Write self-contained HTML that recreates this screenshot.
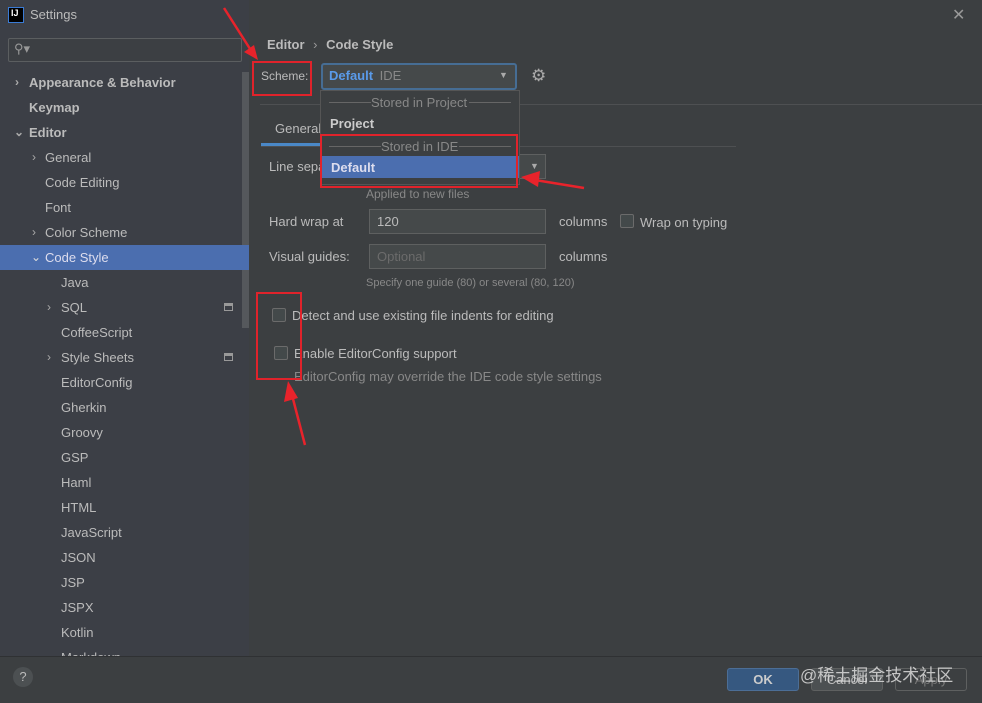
<!DOCTYPE html>
<html><head><style>
*{margin:0;padding:0;box-sizing:border-box}
body{width:982px;height:703px;background:#3c3f41;font-family:"Liberation Sans","Noto Sans CJK SC",sans-serif;font-size:13px;color:#bbbbbb;position:relative;overflow:hidden}
.a{position:absolute;white-space:nowrap}
.side{position:absolute;left:0;top:0;width:249px;height:656px;background:#3c3f46}
.row{position:absolute;left:0;width:242px;height:25px;line-height:25px}
.b{font-weight:bold}
.chev{position:absolute;font-size:12px;color:#aaa}
.red{position:absolute;border:2px solid #e0232b}
.inp{position:absolute;background:#45494a;border:1px solid #5e6060;height:25px;line-height:23px;padding-left:7px}
.cb{position:absolute;width:14px;height:14px;border:1px solid #6b6b6b;background:#43494a;border-radius:2px}
.btn{position:absolute;height:23px;border:1px solid #5e6060;border-radius:3px;text-align:center;line-height:21px;width:72px}
</style></head><body>
<div class="side"></div>
<div class="a" style="left:8px;top:7px;width:16px;height:16px;background:#000;border:1px solid #3a7bd5;color:#fff;font-size:9px;font-weight:bold;line-height:10px;padding-left:2px">IJ</div>
<div class="a" style="left:30px;top:7px;font-size:13px">Settings</div>
<div class="a" style="left:952px;top:5px;font-size:16px;color:#999">✕</div>
<div class="a" style="left:8px;top:38px;width:234px;height:24px;border:1px solid #5b5e60;background:#3c3f43;border-radius:2px"></div>
<div class="a" style="left:14px;top:41px;color:#999;font-size:13px">⚲▾</div>
<div class="a" style="left:242px;top:72px;width:7px;height:256px;background:#55585c"></div>

<div class="row b" style="top:70px"><span class="chev" style="left:15px">›</span><span class="a" style="left:29px">Appearance &amp; Behavior</span></div>
<div class="row b" style="top:95px"><span class="a" style="left:29px">Keymap</span></div>
<div class="row b" style="top:120px"><span class="chev" style="left:14px">⌄</span><span class="a" style="left:29px">Editor</span></div>
<div class="row" style="top:145px"><span class="chev" style="left:32px">›</span><span class="a" style="left:45px">General</span></div>
<div class="row" style="top:170px"><span class="a" style="left:45px">Code Editing</span></div>
<div class="row" style="top:195px"><span class="a" style="left:45px">Font</span></div>
<div class="row" style="top:220px"><span class="chev" style="left:32px">›</span><span class="a" style="left:45px">Color Scheme</span></div>
<div class="row" style="top:245px;background:#4b6eaf;width:249px"><span class="chev" style="left:31px;color:#ddd">⌄</span><span class="a" style="left:45px;color:#dde">Code Style</span></div>
<div class="row" style="top:270px"><span class="a" style="left:61px">Java</span></div>
<div class="row" style="top:295px"><span class="chev" style="left:47px">›</span><span class="a" style="left:61px">SQL</span><span class="a" style="left:224px;top:8px;width:9px;height:8px;border:1px solid #999;border-top-width:3px"></span></div>
<div class="row" style="top:320px"><span class="a" style="left:61px">CoffeeScript</span></div>
<div class="row" style="top:345px"><span class="chev" style="left:47px">›</span><span class="a" style="left:61px">Style Sheets</span><span class="a" style="left:224px;top:8px;width:9px;height:8px;border:1px solid #999;border-top-width:3px"></span></div>
<div class="row" style="top:370px"><span class="a" style="left:61px">EditorConfig</span></div>
<div class="row" style="top:395px"><span class="a" style="left:61px">Gherkin</span></div>
<div class="row" style="top:420px"><span class="a" style="left:61px">Groovy</span></div>
<div class="row" style="top:445px"><span class="a" style="left:61px">GSP</span></div>
<div class="row" style="top:470px"><span class="a" style="left:61px">Haml</span></div>
<div class="row" style="top:495px"><span class="a" style="left:61px">HTML</span></div>
<div class="row" style="top:520px"><span class="a" style="left:61px">JavaScript</span></div>
<div class="row" style="top:545px"><span class="a" style="left:61px">JSON</span></div>
<div class="row" style="top:570px"><span class="a" style="left:61px">JSP</span></div>
<div class="row" style="top:595px"><span class="a" style="left:61px">JSPX</span></div>
<div class="row" style="top:620px"><span class="a" style="left:61px">Kotlin</span></div>
<div class="row" style="top:645px;height:11px;overflow:hidden"><span class="a" style="left:61px">Markdown</span></div>

<div class="a b" style="left:267px;top:37px">Editor <span style="font-weight:normal;color:#999;margin:0 5px">›</span> Code Style</div>
<div class="a" style="left:261px;top:69px;font-size:12px">Scheme:</div>
<div class="red" style="left:252px;top:61px;width:60px;height:35px"></div>
<div class="a" style="left:321px;top:63px;width:196px;height:27px;border:2px solid #466d94;border-radius:3px;background:#45494a"></div>
<div class="a" style="left:329px;top:68px;color:#5a9bea;font-weight:bold">Default <span style="color:#888;font-weight:normal;margin-left:3px">IDE</span></div>
<div class="a" style="left:499px;top:70px;color:#aaa;font-size:9px">▼</div>
<div class="a" style="left:531px;top:66px;color:#aaa;font-size:17px">⚙</div>
<div class="a" style="left:260px;top:104px;width:722px;height:1px;background:#4e5052"></div>

<div class="a" style="left:275px;top:121px">General</div>
<div class="a" style="left:261px;top:143px;width:60px;height:3px;background:#4a88c7"></div>
<div class="a" style="left:261px;top:146px;width:475px;height:1px;background:#4e5052"></div>
<div class="a" style="left:269px;top:159px">Line sepa</div>
<div class="inp" style="left:500px;top:154px;width:46px"></div>
<div class="a" style="left:530px;top:161px;color:#aaa;font-size:9px">▼</div>
<div class="a" style="left:366px;top:187px;color:#888;font-size:12px">Applied to new files</div>
<div class="a" style="left:269px;top:214px">Hard wrap at</div>
<div class="inp" style="left:369px;top:209px;width:177px">120</div>
<div class="a" style="left:559px;top:214px">columns</div>
<div class="cb" style="left:620px;top:214px"></div>
<div class="a" style="left:640px;top:215px">Wrap on typing</div>
<div class="a" style="left:269px;top:249px">Visual guides:</div>
<div class="inp" style="left:369px;top:244px;width:177px;color:#6b6b6b">Optional</div>
<div class="a" style="left:559px;top:249px">columns</div>
<div class="a" style="left:366px;top:277px;color:#888;font-size:11px">Specify one guide (80) or several (80, 120)</div>
<div class="cb" style="left:272px;top:308px"></div>
<div class="a" style="left:292px;top:308px">Detect and use existing file indents for editing</div>
<div class="cb" style="left:274px;top:346px"></div>
<div class="a" style="left:294px;top:346px">Enable EditorConfig support</div>
<div class="a" style="left:294px;top:369px;color:#888">EditorConfig may override the IDE code style settings</div>
<div class="red" style="left:256px;top:292px;width:46px;height:88px"></div>

<div class="a" style="left:320px;top:90px;width:200px;height:95px;background:#3c3f41;border:1px solid #555"></div>
<div class="a" style="left:329px;top:102px;width:42px;height:1px;background:#666"></div>
<div class="a" style="left:371px;top:95px;color:#888">Stored in Project</div>
<div class="a" style="left:469px;top:102px;width:42px;height:1px;background:#666"></div>
<div class="a b" style="left:330px;top:116px;color:#ccc">Project</div>
<div class="a" style="left:329px;top:146px;width:52px;height:1px;background:#666"></div>
<div class="a" style="left:381px;top:139px;color:#888">Stored in IDE</div>
<div class="a" style="left:459px;top:146px;width:52px;height:1px;background:#666"></div>
<div class="a" style="left:321px;top:156px;width:198px;height:22px;background:#4b6eaf"></div>
<div class="a b" style="left:331px;top:160px;color:#dde">Default</div>
<div class="red" style="left:320px;top:134px;width:198px;height:54px"></div>

<svg class="a" style="left:0;top:0" width="982" height="703">
<g stroke="#e8232b" stroke-width="2.5" fill="#e8232b">
<line x1="224" y1="8" x2="252" y2="52"/><polygon points="258,60 244,52 254,45" stroke="none"/>
<line x1="584" y1="188" x2="535" y2="180"/><polygon points="521,177 540,171 538,187" stroke="none"/>
<line x1="305" y1="445" x2="292" y2="395"/><polygon points="288,381 284,402 298,398" stroke="none"/>
</g></svg>

<div class="a" style="left:0;top:656px;width:982px;height:1px;background:#2f3133"></div>
<div class="a" style="left:13px;top:667px;width:20px;height:20px;border-radius:50%;background:#4c5052;text-align:center;line-height:20px;color:#bbb;font-size:13px">?</div>
<div class="btn" style="left:727px;top:668px;background:#365880;border-color:#4c6e96;color:#ccc;font-weight:bold">OK</div>
<div class="btn" style="left:811px;top:668px;background:#4c5052">Cancel</div>
<div class="btn" style="left:895px;top:668px;color:#777">Apply</div>
<div class="a" style="left:800px;top:661px;font-size:17px;color:rgba(220,220,220,0.85)">@稀土掘金技术社区</div>
</body></html>
